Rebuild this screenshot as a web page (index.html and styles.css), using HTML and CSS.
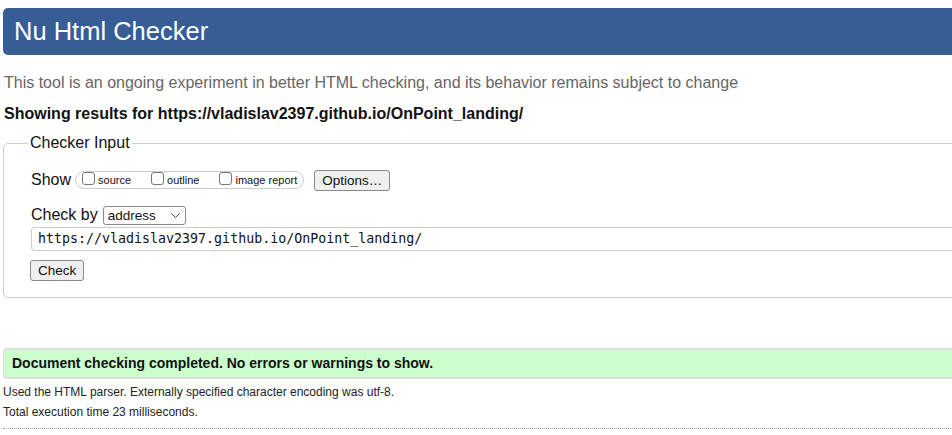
FILE: index.html
```html
<!DOCTYPE html>
<html lang="en">
<head>
<meta charset="utf-8">
<title>Nu Html Checker</title>
<link rel="stylesheet" href="styles.css">
</head>
<body>
<div class="page">
  <h1 class="banner">Nu Html Checker</h1>
  <p class="intro">This tool is an ongoing experiment in better HTML checking, and its behavior remains subject to change</p>
  <p class="showing">Showing results for https://vladislav2397.github.io/OnPoint_landing/</p>
  <fieldset class="checker">
    <legend>Checker Input</legend>
    <div class="row show-row">
      <span class="lbl">Show</span>
      <span class="opts">
        <label class="opt"><span class="cb"></span>source</label>
        <label class="opt"><span class="cb"></span>outline</label>
        <label class="opt"><span class="cb"></span>image report</label>
      </span>
      <span class="btn options">Options…</span>
    </div>
    <div class="row by-row">
      <span class="lbl">Check by</span>
      <span class="select">address<svg class="chev" width="9" height="5" viewBox="0 0 9 5"><path d="M0.5 0.5l4 4 4-4" fill="none" stroke="#444" stroke-width="1"/></svg></span>
    </div>
    <div class="url">https://vladislav2397.github.io/OnPoint_landing/</div>
    <div class="row check-row"><span class="btn check">Check</span></div>
  </fieldset>
  <p class="success">Document checking completed. No errors or warnings to show.</p>
  <p class="info first">Used the HTML parser. Externally specified character encoding was utf-8.</p>
  <p class="info">Total execution time 23 milliseconds.</p>
  <hr class="dots">
</div>
</body>
</html>
```
FILE: styles.css
```css
html { overflow: hidden; }
body {
  margin: 0;
  background: #fff;
  font-family: "Liberation Sans", Arial, Helvetica, sans-serif;
  color: #111;
}
.page {
  width: 1000px;
  padding: 8px 0 0 3px;
}
.banner {
  margin: 0;
  height: 47px;
  box-sizing: border-box;
  background: #365d95;
  color: #fff;
  font-weight: normal;
  font-size: 25.5px;
  line-height: 47px;
  padding-left: 11px;
  border-radius: 5px;
}
.intro {
  margin: 18px 0 0 1px;
  font-size: 16px;
  line-height: 20px;
  color: #666;
}
.showing {
  margin: 11px 0 0 1px;
  font-size: 16px;
  line-height: 20px;
  font-weight: bold;
  color: #111;
}
.checker {
  margin: 9px 0 0 0;
  border: 1px solid #ccc;
  border-radius: 5px;
  padding: 0 0 16px 27px;
}
.checker legend {
  font-size: 16px;
  line-height: 20px;
  padding: 0 2px;
  margin-left: -3px;
  color: #111;
}
.row {
  display: flex;
  align-items: center;
}
.lbl { font-size: 16px; }
.show-row {
  margin-top: 16px;
  height: 22px;
}
.opts {
  display: inline-flex;
  align-items: center;
  margin-left: 4px;
  height: 18px;
  box-sizing: border-box;
  border: 1px solid #ccc;
  border-radius: 9px;
  padding: 0 6px 0 6px;
  gap: 20px;
}
.opt {
  display: inline-flex;
  align-items: center;
  font-size: 11px;
  color: #111;
}
.cb {
  width: 11px;
  height: 11px;
  border: 1px solid #777;
  border-radius: 3px;
  margin-right: 3px;
  margin-top: -3px;
  background: #fff;
}
.btn {
  display: inline-block;
  box-sizing: border-box;
  border: 1px solid #888;
  border-radius: 3px;
  background: #efefef;
  font-size: 13.5px;
  line-height: 19px;
  padding: 0 7px;
  color: #111;
}
.options { margin-left: 10px; }
.by-row {
  margin-top: 14px;
  height: 20px;
}
.select {
  display: inline-flex;
  align-items: center;
  justify-content: space-between;
  box-sizing: border-box;
  width: 83px;
  height: 19px;
  margin-left: 5px;
  border: 1px solid #888;
  border-radius: 3px;
  font-size: 13.5px;
  padding: 0 5px 0 4px;
}
.url {
  margin-top: 2px;
  height: 24px;
  box-sizing: border-box;
  border: 1px solid #ccc;
  border-right: 0;
  border-radius: 4px 0 0 4px;
  font-family: "DejaVu Sans Mono", monospace;
  font-size: 13.3px;
  line-height: 22px;
  padding-left: 6px;
  color: #111;
}
.check-row { margin-top: 9px; margin-left: -1px; }
.success {
  margin: 50px 0 0 0;
  height: 31px;
  box-sizing: border-box;
  background: #ccffcc;
  border-top: 2px solid #ddd;
  border-bottom: 2px solid #ddd;
  border-left: 1px solid #ddd;
  border-radius: 4px 0 0 4px;
  font-weight: bold;
  font-size: 14px;
  line-height: 27px;
  padding-left: 8px;
}
.info {
  margin: 6px 0 0 0;
  font-size: 12px;
  line-height: 14px;
  color: #222;
}
.dots {
  margin: 9px 0 0 0;
  border: 0;
  border-top: 1px dotted #999;
}
```
